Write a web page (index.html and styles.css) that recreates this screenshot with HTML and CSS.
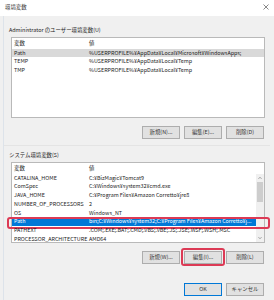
FILE: index.html
```html
<!DOCTYPE html>
<html lang="ja">
<head>
<meta charset="utf-8">
<title>環境変数</title>
<link rel="stylesheet" href="styles.css">
</head>
<body>
<div class="titlebar">
  <span class="title">環境変数</span>
  <svg class="close" viewBox="0 0 6 6" width="6" height="6"><path d="M0.5 0.5L5.5 5.5M5.5 0.5L0.5 5.5" stroke="#555" stroke-width="0.7" fill="none"/></svg>
</div>
<div class="dialog">
  <div class="label">Administrator のユーザー環境変数(U)</div>
  <div class="list">
    <div class="list-head"><span>変数</span><span>値</span></div>
    <div class="rows">
      <div class="row sel-gray"><span>Path</span><span>%USERPROFILE%¥AppData¥Local¥Microsoft¥WindowsApps;</span></div>
      <div class="row"><span>TEMP</span><span>%USERPROFILE%¥AppData¥Local¥Temp</span></div>
      <div class="row"><span>TMP</span><span>%USERPROFILE%¥AppData¥Local¥Temp</span></div>
    </div>
  </div>
  <div class="buttons">
    <button class="btn">新規(N)...</button>
    <button class="btn">編集(E)...</button>
    <button class="btn">削除(D)</button>
  </div>
  <div class="divider"></div>
  <div class="label">システム環境変数(S)</div>
  <div class="list">
    <div class="list-head"><span>変数</span><span>値</span></div>
    <div class="list-body">
      <div class="rows narrow">
        <div class="row"><span>CATALINA_HOME</span><span>C:¥BizMagic¥Tomcat9</span></div>
        <div class="row"><span>ComSpec</span><span>C:¥Windows¥system32¥cmd.exe</span></div>
        <div class="row"><span>JAVA_HOME</span><span>C:¥Program Files¥Amazon Corretto¥jre8</span></div>
        <div class="row"><span>NUMBER_OF_PROCESSORS</span><span>2</span></div>
        <div class="row"><span>OS</span><span>Windows_NT</span></div>
        <div class="row sel-blue mark"><span>Path</span><span class="fit">bin;C:¥Windows¥system32;C:¥Program Files¥Amazon Corretto¥j...</span></div>
        <div class="row"><span>PATHEXT</span><span>.COM;.EXE;.BAT;.CMD;.VBS;.VBE;.JS;.JSE;.WSF;.WSH;.MSC</span></div>
        <div class="row"><span>PROCESSOR_ARCHITECTURE</span><span>AMD64</span></div>
      </div>
      <div class="scrollbar">
        <svg class="arrow" viewBox="0 0 8 8" width="8" height="8"><path d="M2.5 4.8L4 3.3L5.5 4.8" stroke="#606060" stroke-width="0.6" fill="none"/></svg>
        <div class="thumb"></div>
        <div class="track-fill"></div>
        <svg class="arrow" viewBox="0 0 8 8" width="8" height="8"><path d="M2.5 3.2L4 4.7L5.5 3.2" stroke="#606060" stroke-width="0.6" fill="none"/></svg>
      </div>
    </div>
  </div>
  <div class="buttons buttons-2">
    <button class="btn">新規(W)...</button>
    <button class="btn mark-btn">編集(I)...</button>
    <button class="btn">削除(L)</button>
  </div>
  <div class="buttons footer">
    <button class="btn default">OK</button>
    <button class="btn">キャンセル</button>
  </div>
</div>
</body>
</html>
```
FILE: styles.css
```css
* { box-sizing: border-box; }
html, body { margin: 0; padding: 0; }
body {
  width: 274px;
  height: 300px;
  overflow: hidden;
  background: #f0f0f0;
  font-family: "Noto Sans CJK JP", "Noto Sans", sans-serif;
  font-size: 5.4px;
  color: #1e1e1e;
}
.titlebar {
  height: 16px;
  background: #ffffff;
  display: flex;
  align-items: center;
  justify-content: space-between;
  padding: 0 5px 2px 5px;
}
.title { line-height: 7px; color: #333; }
.close { display: block; }
.dialog {
  margin-left: 3px;
  border-left: 1px solid #dde3ea;
  padding: 11px 9px 0 7px;
  height: 284px;
}
.label {
  height: 7px;
  line-height: 7px;
  margin-left: -2px;
  white-space: nowrap;
}
.list {
  margin-top: 3px;
  height: 81px;
  background: #ffffff;
  border: 1px solid #b9b9b9;
}
.list + .buttons { margin-top: 8px; }
.list-head {
  display: grid;
  grid-template-columns: 76px 1fr;
  height: 10.5px;
  line-height: 10.5px;
}
.list-head span:first-child, .row span:first-child { padding-left: 2px; }
.list-head span:last-child, .row span:last-child { padding-left: 1px; }
.row {
  position: relative;
  display: grid;
  grid-template-columns: 76px 168px;
  height: 8.8px;
  line-height: 8.8px;
  white-space: nowrap;
}
.narrow .row { grid-template-columns: 76px 166px; }
.row span { overflow: hidden; text-overflow: ellipsis; }
.row span.fit { overflow: visible; letter-spacing: -0.05px; }
.sel-gray { background: #d9d9d9; }
.sel-blue { background: #0078d7; color: #ffffff; }
.mark::after {
  content: "";
  position: absolute;
  left: -5px;
  right: -14px;
  top: -0.7px;
  bottom: -2.7px;
  border: 2px solid #dc3a55;
  border-radius: 3px;
}
.list-body { display: flex; height: 68.5px; }
.rows.narrow { flex: 1; }
.scrollbar {
  width: 8px;
  background: #f0f0f0;
  display: flex;
  flex-direction: column;
  align-items: center;
}
.arrow { display: block; flex: none; }
.thumb {
  width: 6px;
  height: 20px;
  background: #cdcdcd;
  flex: none;
}
.track-fill { flex: 1; }
.buttons {
  display: flex;
  justify-content: flex-end;
  gap: 4px;
  margin-right: 1px;
}
.btn {
  position: relative;
  width: 38px;
  height: 13px;
  margin: 0;
  padding: 0;
  background: #e1e1e1;
  border: 1px solid #adadad;
  border-radius: 0;
  font-family: inherit;
  font-size: 5.4px;
  line-height: 11px;
  color: #333333;
  white-space: nowrap;
}
.buttons-2 .btn, .footer .btn { height: 12.5px; line-height: 10.5px; }
.default { border-color: #0078d7; }
.mark-btn::after {
  content: "";
  position: absolute;
  left: -4px;
  right: -4px;
  top: -4px;
  bottom: -3px;
  border: 2px solid #dc3a55;
  border-radius: 3px;
}
.divider {
  margin: 6px -5px 6px -7px;
  height: 1px;
  background: #e4e4e4;
}
.buttons-2 { margin-top: 8px; }
.footer { margin-top: 19.5px; }
```
